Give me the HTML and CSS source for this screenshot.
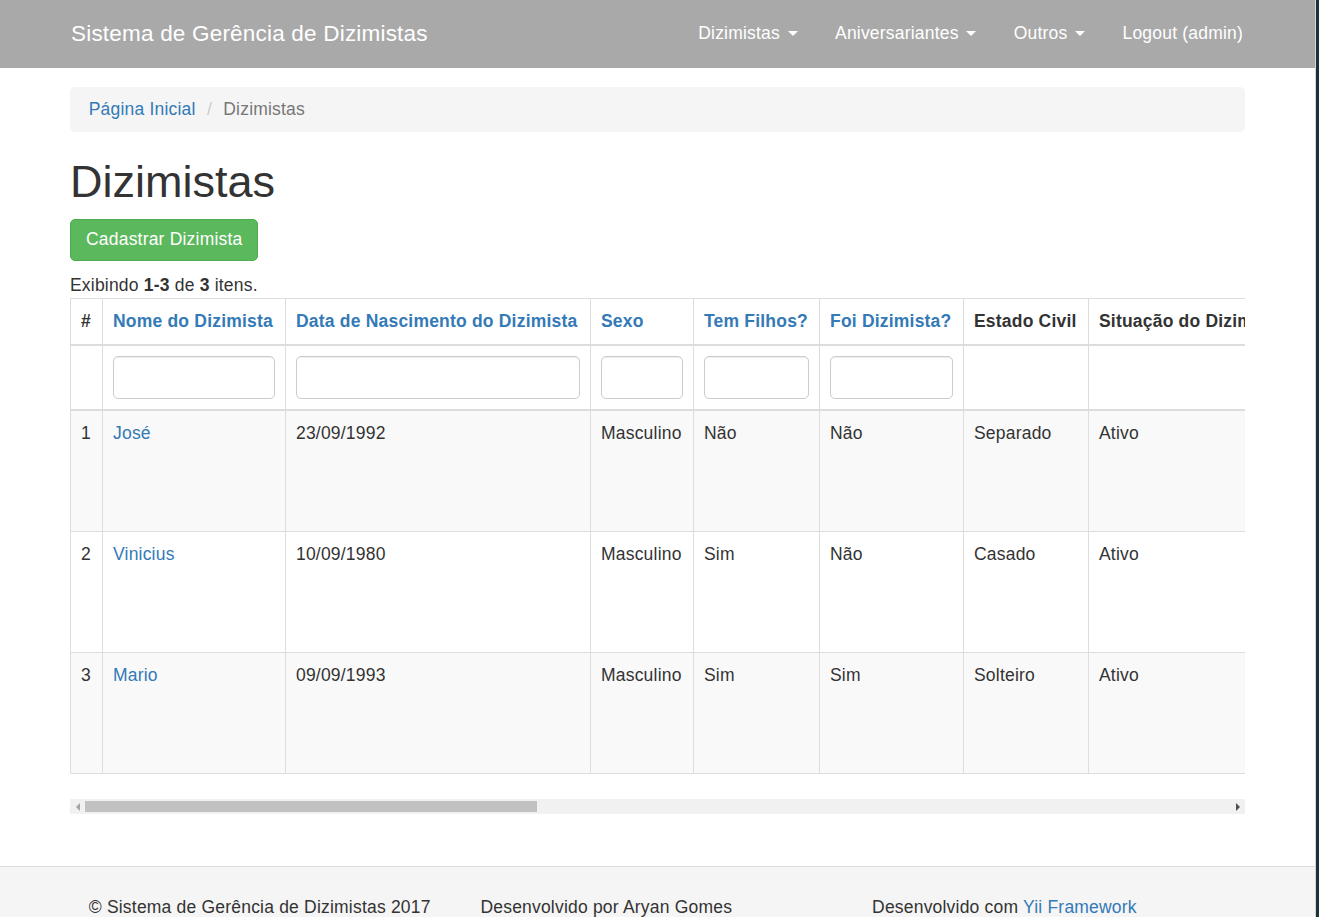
FILE: index.html
```html
<!DOCTYPE html>
<html lang="pt-BR">
<head>
<meta charset="utf-8">
<title>Dizimistas</title>
<link rel="stylesheet" href="styles.css">
</head>
<body>
<div class="wrap">
  <nav class="navbar">
    <div class="container navbar-inner">
      <a class="navbar-brand" href="#">Sistema de Gerência de Dizimistas</a>
      <ul class="nav">
        <li><a href="#">Dizimistas <span class="caret"></span></a></li>
        <li><a href="#">Aniversariantes <span class="caret"></span></a></li>
        <li><a href="#">Outros <span class="caret"></span></a></li>
        <li><a href="#">Logout (admin)</a></li>
      </ul>
    </div>
  </nav>

  <div class="container main">
    <ul class="breadcrumb">
      <li><a href="#">Página Inicial</a></li>
      <li class="active">Dizimistas</li>
    </ul>

    <h1 class="page-title">Dizimistas</h1>

    <p class="actions"><a class="btn btn-success" href="#">Cadastrar Dizimista</a></p>

    <div class="grid-view">
      <div class="summary">Exibindo <b>1-3</b> de <b>3</b> itens.</div>
      <div class="table-scroll">
        <table class="table">
          <colgroup>
            <col class="c-num">
            <col class="c-nome">
            <col class="c-data">
            <col class="c-sexo">
            <col class="c-filhos">
            <col class="c-foi">
            <col class="c-estado">
            <col class="c-situacao">
            <col class="c-extra1">
            <col class="c-extra2">
            <col class="c-extra3">
            <col class="c-extra4">
          </colgroup>
          <thead>
            <tr class="head-row">
              <th>#</th>
              <th><a href="#">Nome do Dizimista</a></th>
              <th><a href="#">Data de Nascimento do Dizimista</a></th>
              <th><a href="#">Sexo</a></th>
              <th><a href="#">Tem Filhos?</a></th>
              <th><a href="#">Foi Dizimista?</a></th>
              <th>Estado Civil</th>
              <th>Situação do Dizimista</th>
              <th>Endereço</th>
              <th>Telefone</th>
              <th>Observações</th>
              <th></th>
            </tr>
            <tr class="filters">
              <td></td>
              <td><input class="form-control" type="text"></td>
              <td><input class="form-control" type="text"></td>
              <td><input class="form-control" type="text"></td>
              <td><input class="form-control" type="text"></td>
              <td><input class="form-control" type="text"></td>
              <td></td>
              <td></td>
              <td></td>
              <td></td>
              <td></td>
              <td></td>
            </tr>
          </thead>
          <tbody>
            <tr class="data-row odd first">
              <td>1</td>
              <td><a href="#">José</a></td>
              <td>23/09/1992</td>
              <td>Masculino</td>
              <td>Não</td>
              <td>Não</td>
              <td>Separado</td>
              <td>Ativo</td>
              <td></td><td></td><td></td><td></td>
            </tr>
            <tr class="data-row">
              <td>2</td>
              <td><a href="#">Vinicius</a></td>
              <td>10/09/1980</td>
              <td>Masculino</td>
              <td>Sim</td>
              <td>Não</td>
              <td>Casado</td>
              <td>Ativo</td>
              <td></td><td></td><td></td><td></td>
            </tr>
            <tr class="data-row odd">
              <td>3</td>
              <td><a href="#">Mario</a></td>
              <td>09/09/1993</td>
              <td>Masculino</td>
              <td>Sim</td>
              <td>Sim</td>
              <td>Solteiro</td>
              <td>Ativo</td>
              <td></td><td></td><td></td><td></td>
            </tr>
          </tbody>
        </table>
      </div>
      <div class="hscrollbar" aria-hidden="true">
        <span class="sb-btn sb-left"><span class="sb-arrow-left"></span></span>
        <span class="sb-track"><span class="sb-thumb"></span></span>
        <span class="sb-btn sb-right"><span class="sb-arrow-right"></span></span>
      </div>
    </div>
  </div>
</div>

<footer class="footer">
  <div class="container footer-inner">
    <p class="footer-col">© Sistema de Gerência de Dizimistas 2017</p>
    <p class="footer-col">Desenvolvido por Aryan Gomes</p>
    <p class="footer-col">Desenvolvido com <a href="#">Yii Framework</a></p>
  </div>
</footer>
</body>
</html>
```

FILE: styles.css
```css
* { box-sizing: border-box; }

html {
  background: #1d3139;
  height: 917px;
  overflow: hidden;
}

body {
  margin: 0 3px 0 0;
  border-right: 1px solid #d6d6d6;
  background: #fff;
  font-family: "Liberation Sans", Arial, Helvetica, sans-serif;
  font-size: 17.5px;
  line-height: 25px;
  letter-spacing: 0.2px;
  color: #333;
  min-height: 917px;
}

a { color: #337ab7; text-decoration: none; }

.container {
  width: 1212.5px;
  margin: 0 auto;
  padding: 0 18.75px;
}

/* Navbar */
.navbar {
  background: #a9a9a9;
  height: 68px;
}
.navbar-inner {
  display: flex;
  align-items: center;
  justify-content: space-between;
  height: 68px;
  padding-bottom: 2px;
}
.navbar-brand {
  color: #fff;
  font-size: 22.5px;
  line-height: 25px;
  margin-left: 1px;
}
.nav {
  display: flex;
  list-style: none;
  margin: 0 -16.75px 0 0;
  padding: 0;
}
.nav a {
  display: block;
  color: #fff;
  padding: 0 18.75px;
  line-height: 25px;
}
.caret {
  display: inline-block;
  width: 0;
  height: 0;
  margin-left: 2.5px;
  vertical-align: middle;
  border-top: 5px solid;
  border-left: 5px solid transparent;
  border-right: 5px solid transparent;
}

/* Main */
.main {
  padding-top: 19px;
  padding-bottom: 52px;
}
.breadcrumb {
  list-style: none;
  margin: 0 0 25px;
  padding: 10px 18.75px;
  background: #f5f5f5;
  border-radius: 5px;
  display: flex;
}
.breadcrumb li + li::before {
  content: "/\00a0";
  color: #ccc;
  padding: 0 6.25px;
  margin-left: 5px;
}
.breadcrumb .active { color: #777; }

.page-title {
  font-size: 45px;
  line-height: 49.5px;
  font-weight: 500;
  letter-spacing: 0;
  margin: 0 0 12px;
}

.actions { margin: 0 0 12.5px; }
.btn {
  display: inline-block;
  padding: 7.5px 15px;
  font-size: 17.5px;
  line-height: 25px;
  border: 1px solid transparent;
  border-radius: 5px;
}
.btn-success {
  color: #fff;
  background: #5cb85c;
  border-color: #4cae4c;
}

.summary { line-height: 25px; }

.table-scroll {
  overflow: hidden;
}
.table {
  width: 2976px;
  table-layout: fixed;
  border-collapse: collapse;
  border: 1px solid #ddd;
  margin-bottom: 25px;
}
.c-num { width: 32px; }
.c-nome { width: 183px; }
.c-data { width: 305px; }
.c-sexo { width: 103px; }
.c-filhos { width: 126px; }
.c-foi { width: 144px; }
.c-estado { width: 125px; }
.c-situacao { width: 201px; }
.c-extra1 { width: 560px; }
.c-extra2 { width: 300px; }
.c-extra3 { width: 760px; }
.c-extra4 { width: 137px; }

.table th,
.table td {
  padding: 10px;
  border: 1px solid #ddd;
  text-align: left;
  vertical-align: top;
  line-height: 25px;
  white-space: nowrap;
  overflow: hidden;
}
.table th { font-weight: bold; }
.table th a { color: #337ab7; }
.head-row th { border-bottom: 2px solid #ddd; }
.filters td { border-bottom: 2px solid #ddd; }
.data-row { height: 121px; }
.data-row.first { height: 122px; }
.data-row.odd { background: #f9f9f9; }

.form-control {
  display: block;
  width: 100%;
  height: 42.5px;
  padding: 7.5px 15px;
  font: inherit;
  color: #555;
  background: #fff;
  border: 1px solid #ccc;
  border-radius: 5px;
  box-shadow: inset 0 1px 1px rgba(0,0,0,.075);
}

/* Horizontal scrollbar of the grid */
.hscrollbar {
  display: flex;
  height: 15px;
  background: #f1f1f1;
}
.sb-btn {
  flex: 0 0 15px;
  display: flex;
  align-items: center;
  justify-content: center;
}
.sb-arrow-left {
  width: 0;
  height: 0;
  border-top: 4px solid transparent;
  border-bottom: 4px solid transparent;
  border-right: 4px solid #a3a3a3;
}
.sb-arrow-right {
  width: 0;
  height: 0;
  border-top: 4px solid transparent;
  border-bottom: 4px solid transparent;
  border-left: 4px solid #505050;
}
.sb-track {
  flex: 1;
  padding: 2px 0;
}
.sb-thumb {
  display: block;
  width: 452px;
  height: 11px;
  background: #c1c1c1;
}

/* Footer */
.footer {
  background: #f5f5f5;
  border-top: 1px solid #ddd;
  height: 75px;
  padding-top: 28px;
}
.footer-inner {
  display: flex;
}
.footer-col {
  flex: 0 0 33.3333%;
  margin: 0;
  padding: 0 18.75px;
}
.footer-inner.container { padding: 0; width: 1175px; }
```
